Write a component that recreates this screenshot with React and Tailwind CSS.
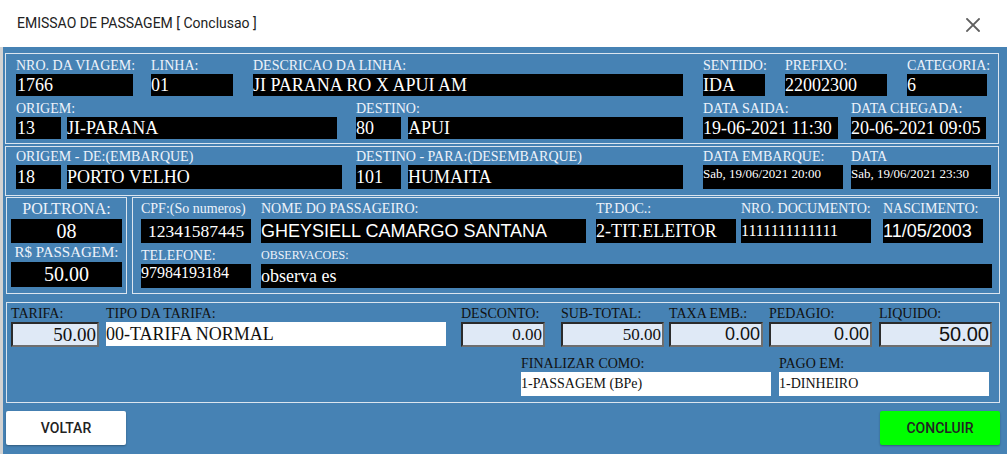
import React from "react";

// label styles
const lightLabel = "text-[14px] leading-[16px] text-[#eef3fb] whitespace-nowrap";
const lightLabel17 = "text-[14px] leading-[17px] text-[#eef3fb] whitespace-nowrap";
const lightLabel21 = "text-[14px] leading-[21px] text-[#eef3fb] whitespace-nowrap";
const darkLabel = "text-[14px] leading-[16px] text-[#111] whitespace-nowrap";

// black display box (width given where it is used)
const blackBox = "bg-black text-white whitespace-nowrap overflow-hidden";
const box22 = `${blackBox} h-[22px] text-[18px] leading-[22px]`;
const box24 = `${blackBox} h-[24px] text-[18px] leading-[24px]`;

// inset light box used for money values
const moneyBox =
  "w-full bg-[#dfe9f6] text-[#111] text-right pr-px h-[25px] border-2 border-t-[#2b2b2b] border-l-[#2b2b2b] border-b-[#6e6e6e] border-r-[#6e6e6e] whitespace-nowrap overflow-hidden";
const whiteBox = "w-full bg-white text-[#111] h-[24px] leading-[24px] whitespace-nowrap overflow-hidden";

const Field = ({ label, labelClass = lightLabel, className = "", children }) => (
  <div className={`flex flex-col shrink-0 ${className}`}>
    <span className={labelClass}>{label}</span>
    {children}
  </div>
);

const CloseIcon = () => (
  <svg width="14" height="14" viewBox="0 0 14 14" fill="none">
    <path d="M1 1L13 13M13 1L1 13" stroke="#5f5f5f" strokeWidth="1.8" strokeLinecap="square" />
  </svg>
);

export default function App() {
  return (
    <div className="w-[1007px] h-[454px] overflow-hidden bg-white font-['Liberation_Serif',serif]">
      {/* header */}
      <div className="h-[47px] flex items-center justify-between pl-[17px] pr-[27px] font-['Roboto',sans-serif]">
        <span className="text-[14px] text-[#222] mt-[-1px]">EMISSAO DE PASSAGEM [ Conclusao ]</span>
        <span className="mt-[3px]">
          <CloseIcon />
        </span>
      </div>

      {/* body */}
      <div className="h-[407px] bg-[#4682b4] border-l-[3px] border-[#d2d2d2] pt-[6px] pl-[2px] pr-[8px]">
        {/* viagem */}
        <div className="border border-[#dbe5ef] pl-[10px] pt-[4px] pb-[4px]">
          <div className="flex">
            <Field label="NRO. DA VIAGEM:" className="w-[117px]">
              <div className={`${box22} w-full pl-px`}>1766</div>
            </Field>
            <Field label="LINHA:" className="w-[82px] ml-[18px]">
              <div className={`${box22} w-full`}>01</div>
            </Field>
            <Field label="DESCRICAO DA LINHA:" className="w-[430px] ml-[20px]">
              <div className={`${box22} w-full`}>JI PARANA RO X APUI AM</div>
            </Field>
            <Field label="SENTIDO:" className="w-[62px] ml-[20px]">
              <div className={`${box22} w-full`}>IDA</div>
            </Field>
            <Field label="PREFIXO:" className="w-[102px] ml-[20px]">
              <div className={`${box22} w-full`}>22002300</div>
            </Field>
            <Field label="CATEGORIA:" className="w-[80px] ml-[20px]">
              <div className={`${box22} w-full`}>6</div>
            </Field>
          </div>

          <div className="flex mt-[5px]">
            <Field label="ORIGEM:" className="w-[321px]">
              <div className="flex gap-[6px]">
                <div className={`${box22} w-[45px] shrink-0 pl-px`}>13</div>
                <div className={`${box22} w-[270px] shrink-0`}>JI-PARANA</div>
              </div>
            </Field>
            <Field label="DESTINO:" className="w-[327px] ml-[19px]">
              <div className="flex gap-[7px]">
                <div className={`${box22} w-[45px] shrink-0`}>80</div>
                <div className={`${box22} w-[275px] shrink-0`}>APUI</div>
              </div>
            </Field>
            <Field label="DATA SAIDA:" className="w-[135px] ml-[20px]">
              <div className={`${box22} w-full`}>19-06-2021 11:30</div>
            </Field>
            <Field label="DATA CHEGADA:" className="w-[135px] ml-[13px]">
              <div className={`${box22} w-full`}>20-06-2021 09:05</div>
            </Field>
          </div>
        </div>

        {/* embarque */}
        <div className="mt-[2px] border border-[#dbe5ef] pl-[10px] pt-px pb-[6px]">
          <div className="flex">
            <Field label="ORIGEM - DE:(EMBARQUE)" labelClass={lightLabel17} className="w-[326px]">
              <div className="flex gap-[6px]">
                <div className={`${box24} w-[45px] shrink-0 pl-px`}>18</div>
                <div className={`${box24} w-[275px] shrink-0`}>PORTO VELHO</div>
              </div>
            </Field>
            <Field label="DESTINO - PARA:(DESEMBARQUE)" labelClass={lightLabel17} className="w-[327px] ml-[14px]">
              <div className="flex gap-[7px]">
                <div className={`${box24} w-[45px] shrink-0`}>101</div>
                <div className={`${box24} w-[275px] shrink-0`}>HUMAITA</div>
              </div>
            </Field>
            <Field label="DATA EMBARQUE:" labelClass={lightLabel17} className="w-[140px] ml-[20px]">
              <div className={`${blackBox} w-full h-[24px] text-[13px] leading-[17px]`}>Sab, 19/06/2021 20:00</div>
            </Field>
            <Field label="DATA" labelClass={lightLabel17} className="w-[140px] ml-[8px]">
              <div className={`${blackBox} w-full h-[24px] text-[13px] leading-[17px]`}>Sab, 19/06/2021 23:30</div>
            </Field>
          </div>
        </div>

        {/* passageiro */}
        <div className="mt-px ml-px mr-[-1px] flex gap-[5px] h-[97px]">
          <div className="w-[121px] shrink-0 border border-[#dbe5ef] px-[4px] flex flex-col items-center text-[#eef3fb]">
            <span className="text-[16px] leading-[21px] whitespace-nowrap">POLTRONA:</span>
            <div className={`${blackBox} w-full h-[24px] text-[20px] leading-[24px] text-center`}>08</div>
            <span className="text-[15px] leading-[19px] whitespace-nowrap">R$ PASSAGEM:</span>
            <div className={`${blackBox} w-full h-[25px] text-[20px] leading-[25px] text-center`}>50.00</div>
          </div>

          <div className="flex-1 border border-[#dbe5ef] pl-[8px]">
            <div className="flex">
              <Field label="CPF:(So numeros)" labelClass={lightLabel21} className="w-[110px]">
                <div className={`${blackBox} w-full h-[24px] text-[17.5px] leading-[24px] text-center`}>12341587445</div>
              </Field>
              <Field label="NOME DO PASSAGEIRO:" labelClass={lightLabel21} className="w-[325px] ml-[10px]">
                <div className={`${box24} w-full font-['Liberation_Sans',Arial,sans-serif]`}>GHEYSIELL CAMARGO SANTANA</div>
              </Field>
              <Field label="TP.DOC.:" labelClass={lightLabel21} className="w-[140px] ml-[10px]">
                <div className={`${box24} w-full`}>2-TIT.ELEITOR</div>
              </Field>
              <Field label="NRO. DOCUMENTO:" labelClass={lightLabel21} className="w-[130px] ml-[5px]">
                <div className={`${blackBox} w-full h-[24px] text-[16px] leading-[24px]`}>1111111111111</div>
              </Field>
              <Field label="NASCIMENTO:" labelClass={lightLabel21} className="w-[100px] ml-[12px]">
                <div className={`${box24} w-full font-['Liberation_Sans',Arial,sans-serif]`}>11/05/2003</div>
              </Field>
            </div>

            <div className="flex">
              <Field label="TELEFONE:" labelClass={`${lightLabel17} pt-[4px]`} className="w-[110px]">
                <div className={`${blackBox} w-full h-[24px] text-[16px] leading-[14px] pt-[2px]`}>97984193184</div>
              </Field>
              <Field
                label="OBSERVACOES:"
                labelClass="text-[12px] leading-[17px] pt-[4px] text-[#eef3fb] whitespace-nowrap"
                className="w-[731px] ml-[10px]"
              >
                <div className={`${box24} w-full`}>observa es</div>
              </Field>
            </div>
          </div>
        </div>

        {/* valores */}
        <div className="mt-[8px] ml-px mr-[-1px] border border-[#dbe5ef] pl-[4px] pt-[3px] pb-[6px]">
          <div className="flex">
            <Field label="TARIFA:" labelClass={darkLabel} className="w-[88px]">
              <div className={`${moneyBox} text-[19px] leading-[21px]`}>50.00</div>
            </Field>
            <Field label="TIPO DA TARIFA:" labelClass={darkLabel} className="w-[340px] ml-[7px]">
              <div className={`${whiteBox} text-[18px]`}>00-TARIFA NORMAL</div>
            </Field>
            <Field label="DESCONTO:" labelClass={darkLabel} className="w-[84px] ml-[15px]">
              <div className={`${moneyBox} text-[17px] leading-[21px]`}>0.00</div>
            </Field>
            <Field label="SUB-TOTAL:" labelClass={darkLabel} className="w-[103px] ml-[16px]">
              <div className={`${moneyBox} text-[17px] leading-[21px]`}>50.00</div>
            </Field>
            <Field label="TAXA EMB.:" labelClass={darkLabel} className="w-[94px] ml-[5px]">
              <div className={`${moneyBox} text-[18px] leading-[21px] font-['Liberation_Sans',Arial,sans-serif]`}>0.00</div>
            </Field>
            <Field label="PEDAGIO:" labelClass={darkLabel} className="w-[103px] ml-[6px]">
              <div className={`${moneyBox} text-[18px] leading-[21px] font-['Liberation_Sans',Arial,sans-serif]`}>0.00</div>
            </Field>
            <Field label="LIQUIDO:" labelClass={darkLabel} className="w-[113px] ml-[7px]">
              <div className={`${moneyBox} text-[20px] leading-[21px] font-['Liberation_Sans',Arial,sans-serif]`}>50.00</div>
            </Field>
          </div>

          <div className="flex pt-[9px] ml-[510px]">
            <Field label="FINALIZAR COMO:" labelClass={darkLabel} className="w-[250px]">
              <div className={`${whiteBox} text-[14px]`}>1-PASSAGEM (BPe)</div>
            </Field>
            <Field label="PAGO EM:" labelClass={darkLabel} className="w-[210px] ml-[8px]">
              <div className={`${whiteBox} text-[14px]`}>1-DINHEIRO</div>
            </Field>
          </div>
        </div>

        {/* botoes */}
        <div className="mt-[8px] flex justify-between pl-px mr-[-1px] font-['Roboto',sans-serif]">
          <button className="w-[120px] h-[34px] bg-white rounded-[2px] shadow-[0_1px_2px_rgba(0,0,0,0.3)] text-[14px] font-medium text-[#222]">
            VOLTAR
          </button>
          <button className="w-[120px] h-[34px] bg-[#00ff00] rounded-[2px] shadow-[0_1px_2px_rgba(0,0,0,0.3)] text-[14px] font-medium text-[#222]">
            CONCLUIR
          </button>
        </div>
      </div>
    </div>
  );
}
